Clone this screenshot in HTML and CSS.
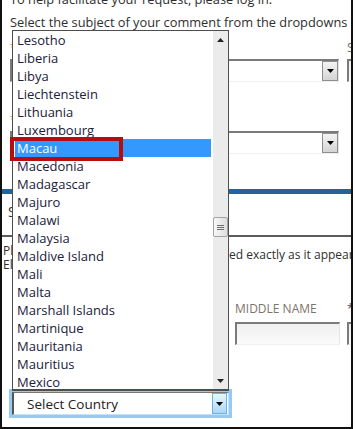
FILE: index.html
```html
<!DOCTYPE html>
<html>
<head>
<meta charset="utf-8">
<link rel="stylesheet" href="styles.css">
</head>
<body>
<div class="frame">
  <p class="intro">To help facilitate your request, please log in.</p>
  <p class="lead">Select the subject of your comment from the dropdowns below.</p>
  <div class="form-grid">
    <div class="field">
      <label class="lbl"><span class="req">*</span></label>
      <div class="select"><span class="select-btn"><svg width="7" height="4" viewBox="0 0 7 4"><polygon points="0,0 7,0 3.5,4" fill="#000"/></svg></span></div>
    </div>
    <div class="field">
      <label class="lbl">Sub-topic</label>
      <div class="input"></div>
    </div>
    <div class="field">
      <label class="lbl"><span class="req">*</span></label>
      <div class="select"><span class="select-btn"><svg width="7" height="4" viewBox="0 0 7 4"><polygon points="0,0 7,0 3.5,4" fill="#000"/></svg></span></div>
    </div>
    <div class="field"></div>
  </div>
  <div class="bluebar"></div>
  <h3 class="section">Submitter Information</h3>
  <div class="rule"></div>
  <div class="note">
    <div class="note-left">Pl<br>El</div>
    <div class="note-mid"></div>
    <div class="note-right">ed exactly as it appears on your</div>
  </div>
  <div class="names">
    <div class="field">
      <label class="lbl"><span class="req">*</span></label>
      <div class="input"></div>
    </div>
    <div class="field">
      <label class="lbl">MIDDLE NAME</label>
      <div class="input"></div>
    </div>
    <div class="field">
      <label class="lbl"><span class="star">*</span> LAST NAME</label>
      <div class="input"></div>
    </div>
  </div>
  <div class="country">
    <div class="country-select">
      <span class="country-text">Select Country</span>
      <span class="country-btn"><svg width="7" height="4" viewBox="0 0 7 4"><polygon points="0,0 7,0 3.5,4" fill="#000"/></svg></span>
    </div>
  </div>
</div>

<div class="listbox">
  <ul class="opts">
    <li class="opt">Lesotho</li>
    <li class="opt">Liberia</li>
    <li class="opt">Libya</li>
    <li class="opt">Liechtenstein</li>
    <li class="opt">Lithuania</li>
    <li class="opt">Luxembourg</li>
    <li class="opt opt-selected">Macau</li>
    <li class="opt">Macedonia</li>
    <li class="opt">Madagascar</li>
    <li class="opt">Majuro</li>
    <li class="opt">Malawi</li>
    <li class="opt">Malaysia</li>
    <li class="opt">Maldive Island</li>
    <li class="opt">Mali</li>
    <li class="opt">Malta</li>
    <li class="opt">Marshall Islands</li>
    <li class="opt">Martinique</li>
    <li class="opt">Mauritania</li>
    <li class="opt">Mauritius</li>
    <li class="opt">Mexico</li>
  </ul>
  <div class="scrollbar">
    <div class="sb-arrow"><svg width="7" height="4" viewBox="0 0 7 4"><polygon points="0,4 7,4 3.5,0" fill="#222"/></svg></div>
    <div class="sb-thumb"><span class="grip"></span><span class="grip"></span><span class="grip"></span></div>
    <div class="sb-arrow sb-down"><svg width="7" height="4" viewBox="0 0 7 4"><polygon points="0,0 7,0 3.5,4" fill="#222"/></svg></div>
  </div>
</div>
<div class="annotation"></div>
</body>
</html>
```

FILE: styles.css
```css
* { box-sizing: border-box; }
html, body { margin: 0; padding: 0; }
body {
  width: 355px;
  height: 429px;
  overflow: hidden;
  position: relative;
  background: #fff;
  font-family: "Open Sans", "Noto Sans", sans-serif;
  color: #2b2b2b;
}
.frame {
  width: 353px;
  height: 429px;
  border: 2px solid #111;
  border-top: 0;
  overflow: hidden;
}
.intro, .lead {
  margin: 0 0 0 8px;
  font-size: 12.8px;
  line-height: 18px;
  white-space: nowrap;
  color: #2e2e2e;
}
.intro { margin-top: -10px; }
.lead { margin-top: 5px; }

.form-grid {
  display: grid;
  grid-template-columns: 329px 120px;
  column-gap: 8px;
  row-gap: 29px;
  margin: 8px 0 0 8px;
}
.field { display: flex; flex-direction: column; }
.lbl {
  height: 18px;
  font-size: 12px;
  line-height: 18px;
  color: #7e7368;
  white-space: nowrap;
}
.req { color: #e8912a; }
.star { color: #555; }
.select {
  margin-top: 2px;
  height: 23px;
  border-top: 2px solid #7b7b7b;
  border-left: 2px solid #7b7b7b;
  border-right: 1px solid #e4e4e4;
  border-bottom: 1px solid #efefef;
  background: #fff;
  display: flex;
  justify-content: flex-end;
}
.select-btn {
  width: 16px;
  border: 1px solid #8e8e8e;
  background: linear-gradient(#f4f4f4, #d4d4d4);
  display: flex;
  align-items: center;
  justify-content: center;
}
.input {
  margin-top: 4px;
  height: 23px;
  border-top: 2px solid #7b7b7b;
  border-left: 2px solid #7b7b7b;
  border-right: 1px solid #e4e4e4;
  border-bottom: 1px solid #efefef;
  background: linear-gradient(#efefef, #fbfbfb);
}
.form-grid .input { margin-top: 2px; }

.bluebar {
  height: 5px;
  margin-top: 35px;
  background: #23629e;
}
.section {
  width: 10px;
  overflow: hidden;
  margin: 9px 0 0 6px;
  font-size: 14px;
  line-height: 18px;
  font-weight: normal;
  color: #333;
  white-space: nowrap;
}
.rule {
  margin-top: 14px;
  height: 2px;
  background: #5c5c5c;
}
.note {
  display: grid;
  grid-template-columns: 10px 217px 1fr;
  margin-top: 7px;
  font-size: 12px;
  line-height: 14px;
  color: #2e2e2e;
}
.note-left { overflow: hidden; white-space: nowrap; padding-left: 1px; }
.note-right { white-space: nowrap; padding-top: 4px; }

.names {
  display: grid;
  grid-template-columns: 216px 105px 120px;
  column-gap: 7px;
  margin: 28px 0 0 10px;
}
.country {
  margin: 47px 0 0 10px;
  width: 217px;
  display: flex;
  flex-direction: column;
}
.country-select {
  height: 23px;
  display: flex;
  align-items: center;
  border-left: 2px solid #555;
  border-top: 1px solid #777;
  border-right: 1px solid #c4e2f9;
  border-bottom: 1px solid #c4e2f9;
  background: #fff;
  box-shadow: 0 0 0 3px #97caf3;
}
.country-text {
  flex: 1;
  padding-left: 13px;
  font-size: 13.5px;
  color: #222;
}
.country-btn {
  width: 15px;
  height: 21px;
  margin-right: 1px;
  border: 1px solid #6fb0e5;
  background: linear-gradient(#eaf6fe, #a9d6f7);
  display: flex;
  align-items: center;
  justify-content: center;
}

/* popup list */
.listbox {
  position: absolute;
  left: 12px;
  top: 30px;
  width: 217px;
  height: 361px;
  border: 1px solid #4e4e4e;
  border-bottom-width: 2px;
  background: #fff;
  display: flex;
  z-index: 2;
}
.opts {
  list-style: none;
  margin: 0;
  padding: 0 2px;
  width: 200px;
  overflow: hidden;
}
.opt {
  height: 18px;
  line-height: 18px;
  padding-left: 2px;
  font-size: 13px;
  color: #20203a;
  white-space: nowrap;
}
.opt-selected { background: #3399ff; color: #fff; }
.scrollbar {
  width: 15px;
  background: #ebebeb;
  display: flex;
  flex-direction: column;
  align-items: center;
}
.sb-arrow {
  height: 17px;
  width: 15px;
  display: flex;
  align-items: center;
  justify-content: center;
}
.sb-down { margin-top: auto; }
.sb-thumb {
  margin-top: 169px;
  width: 15px;
  height: 20px;
  border: 1px solid #a3a3a3;
  border-radius: 2px;
  background: linear-gradient(90deg, #f7f7f7, #dedede);
  display: flex;
  flex-direction: column;
  align-items: center;
  justify-content: center;
  gap: 1px;
}
.grip {
  width: 7px;
  height: 1px;
  background: #6d6d6d;
}
.annotation {
  position: absolute;
  left: 10px;
  top: 137px;
  width: 113px;
  height: 24px;
  border: 4px solid #b60d0d;
  z-index: 3;
}
```
